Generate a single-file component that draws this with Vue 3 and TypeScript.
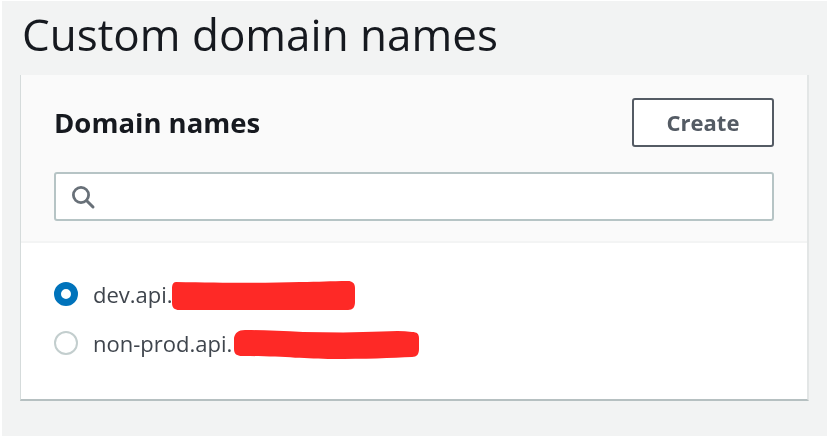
<script setup lang="ts">
import { ref } from 'vue'

const domains = [
  {
    name: 'dev.api.',
    blob: 'M6 2 C3 2 2 5 2 9 L2 23 C2 28 5 30 9 30 L178 30 C183 30 185 27 185 22 L185 8 C185 3 182 1 178 1 C160 1 150 2 130 2 C100 3 60 3 6 2 Z',
    width: 186,
  },
  {
    name: 'non-prod.api.',
    blob: 'M12 1 C5 1 2 4 1 9 L1 20 C1 25 4 27 9 27 C50 27 70 30 100 30 C130 30 160 29 179 28 C184 28 186 25 186 20 L186 9 C186 5 184 3 179 3 C165 1 150 3 130 3 C110 4 90 3 70 3 C50 2 30 1 12 1 Z',
    width: 187,
  },
]

const selected = ref('dev.api.')
</script>

<template>
  <div class="page">
    <h1 class="title">Custom domain names</h1>

    <section class="card">
      <div class="card-header">
        <div class="header-row">
          <h2 class="card-title">Domain names</h2>
          <button class="create-btn" type="button">Create</button>
        </div>

        <div class="search">
          <svg class="search-icon" width="26" height="26" viewBox="0 0 26 26" fill="none">
            <circle cx="11" cy="11" r="7.6" stroke="#687078" stroke-width="2.8" />
            <path d="M16.5 16.5 L23 23" stroke="#687078" stroke-width="3" stroke-linecap="round" />
          </svg>
        </div>
      </div>

      <ul class="domain-list">
        <li
          v-for="domain in domains"
          :key="domain.name"
          class="domain-row"
          @click="selected = domain.name"
        >
          <span class="radio" :class="{ checked: selected === domain.name }"></span>
          <span class="domain-name">{{ domain.name }}</span>
          <svg class="scribble" :width="domain.width" height="31" :viewBox="`0 0 ${domain.width} 31`">
            <path :d="domain.blob" fill="#fe2926" />
          </svg>
        </li>
      </ul>
    </section>
  </div>
</template>

<style>
html,
body {
  margin: 0;
  background: #ffffff;
}
</style>

<style scoped>
.page {
  box-sizing: border-box;
  width: 825px;
  height: 435px;
  margin: 1px 0 0 2px;
  padding: 8px 18px 0 18px;
  background: #f2f3f3;
  font-family: "Open Sans", "Noto Sans", sans-serif;
  overflow: hidden;
  filter: blur(0.45px);
}

.title {
  margin: 0 0 8px;
  height: 58px;
  padding-left: 2px;
  font-size: 44px;
  line-height: 50px;
  font-weight: 400;
  color: #16191f;
}

.card {
  width: 789px;
  background: #ffffff;
  border-left: 1px solid #d5dbdb;
  border-right: 2px solid #e3e6e6;
  border-bottom: 2px solid #b6c0c1;
  box-sizing: border-box;
  height: 326px;
}

.card-header {
  box-sizing: border-box;
  height: 168px;
  padding: 22px 33px 0;
  background: #fafafa;
  border-bottom: 2px solid #f3f4f4;
}

.header-row {
  display: flex;
  align-items: center;
  justify-content: space-between;
  height: 50px;
  margin-bottom: 25px;
}

.card-title {
  margin: 0;
  font-size: 27.5px;
  font-weight: 700;
  color: #16191f;
}

.create-btn {
  box-sizing: border-box;
  width: 142px;
  height: 49px;
  padding: 0;
  background: #ffffff;
  border: 2px solid #545b64;
  border-radius: 3px;
  font-family: inherit;
  font-size: 22px;
  font-weight: 700;
  color: #545b64;
}

.search {
  display: flex;
  align-items: center;
  box-sizing: border-box;
  height: 49px;
  padding-left: 14px;
  background: #ffffff;
  border: 2px solid #b6c4c5;
  border-radius: 3px;
}

.domain-list {
  list-style: none;
  margin: 0;
  padding: 26px 33px 0;
}

.domain-row {
  display: flex;
  align-items: center;
  height: 49px;
}

.radio {
  box-sizing: border-box;
  flex: none;
  width: 24px;
  height: 24px;
  margin-right: 15px;
  background: #ffffff;
  border: 2px solid #c3cece;
  border-radius: 50%;
}

.radio.checked {
  border: 7px solid #0073bb;
}

.domain-name {
  font-size: 22px;
  color: #3f454d;
}

.scribble {
  flex: none;
  margin-top: 3px;
}

.domain-row:first-child .scribble {
  margin-left: -3px;
}

.domain-row:last-child .scribble {
  margin-left: 1px;
}
</style>
